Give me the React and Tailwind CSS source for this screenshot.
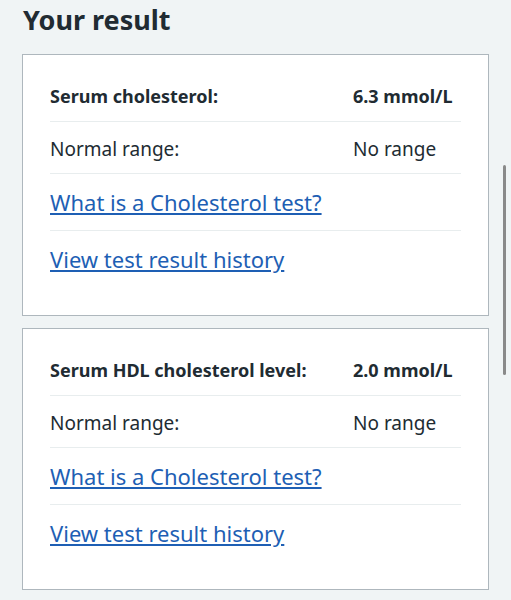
const results = [
  { name: "Serum cholesterol:", value: "6.3 mmol/L" },
  { name: "Serum HDL cholesterol level:", value: "2.0 mmol/L" },
];

function ResultCard({ name, value }) {
  return (
    <div className="bg-white border border-[#aeb7bd] pt-[17px] pb-[27px] px-[27px]">
      <div className="h-[50px] flex items-center border-b border-[#e8edee] font-bold text-[18px] text-[#212b32]">
        <span className="w-[303px]">{name}</span>
        <span>{value}</span>
      </div>
      <div className="h-[52px] flex items-center pt-[3px] border-b border-[#e8edee] text-[19px] text-[#212b32]">
        <span className="w-[303px]">Normal range:</span>
        <span>No range</span>
      </div>
      <div className="h-[57px] flex items-center border-b border-[#e8edee]">
        <a href="#" className="text-[22px] text-[#1e5fb4] underline underline-offset-[2px]">
          What is a Cholesterol test?
        </a>
      </div>
      <div className="h-[57px] flex items-center">
        <a href="#" className="text-[22px] text-[#1e5fb4] underline underline-offset-[2px]">
          View test result history
        </a>
      </div>
    </div>
  );
}

export default function App() {
  return (
    <div
      className="relative min-h-[600px] bg-[#f0f4f5] px-[22px] pb-4"
      style={{ fontFamily: '"Noto Sans", Arial, sans-serif' }}
    >
      <h1 className="h-[40px] leading-[40px] mb-[14px] pl-px text-[27px] font-bold text-[#212b32]">
        Your result
      </h1>
      <div className="flex flex-col gap-[12px]">
        {results.map((r) => (
          <ResultCard key={r.name} {...r} />
        ))}
      </div>
      {/* scroll indicator */}
      <div className="absolute right-[5px] top-[165px] w-[3px] h-[210px] rounded-full bg-[#8a8a8a]" />
    </div>
  );
}
